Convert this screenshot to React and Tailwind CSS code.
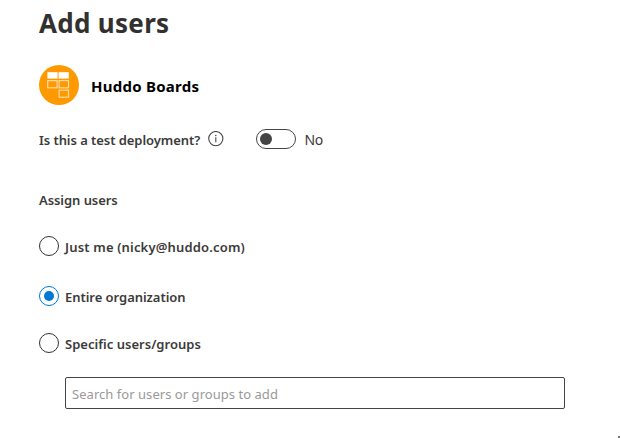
function BoardsLogo() {
  return (
    <svg className="size-10 shrink-0" viewBox="0 0 40 40">
      <circle cx="20" cy="20" r="20" fill="#ff9900" />
      <rect x="8.4" y="7.2" width="10.2" height="6.4" fill="#fff" />
      <rect x="19.6" y="7.2" width="10.2" height="6.4" fill="#fff" />
      <g fill="none" stroke="#ffd9a0" strokeWidth="1.2">
        <rect x="8.7" y="15.6" width="9.4" height="7.2" />
        <rect x="20.1" y="15.6" width="9.4" height="7.2" />
        <rect x="20.1" y="25.2" width="9.4" height="7" />
      </g>
    </svg>
  );
}

function InfoIcon() {
  return (
    <svg className="ml-2 size-4 shrink-0" viewBox="0 0 16 16">
      <circle cx="7.8" cy="7.6" r="7.1" fill="none" stroke="#444" strokeWidth="1.1" />
      <path d="M7.8 6.3v5" stroke="#444" strokeWidth="1.1" />
      <circle cx="7.8" cy="4.4" r=".75" fill="#444" />
    </svg>
  );
}

function Option({ label, checked, className, textClass }) {
  return (
    <label className={"flex h-5 items-center " + className}>
      <span
        className={
          "flex size-5 shrink-0 items-center justify-center rounded-full border " +
          (checked ? "border-[#0078d4]" : "border-[#323130]")
        }
      >
        {checked && <span className="size-2.5 rounded-full bg-[#0078d4]" />}
      </span>
      <span className={"ml-1.5 pt-0.5 leading-5 " + textClass}>{label}</span>
    </label>
  );
}

export default function App() {
  return (
    <main className="flex h-[438px] w-[621px] flex-col overflow-hidden bg-white pl-[39px] font-['Noto_Sans','Open_Sans',sans-serif] text-[13px] font-semibold whitespace-nowrap text-[#3b3a39]">
      <h1 className="mt-1 h-[61px] text-[26px] leading-[38px] font-bold tracking-[0.3px] text-[#323130]">Add users</h1>
      <div className="flex h-10 items-center">
        <BoardsLogo />
        <span className="ml-3 pt-0.5 text-[15px] leading-5 font-bold tracking-[0.25px] text-black">Huddo Boards</span>
      </div>
      <div className="mt-6 flex h-5 items-center">
        <span className="w-[161px] pt-0.5 leading-5 tracking-[-0.06px]">Is this a test deployment?</span>
        <InfoIcon />
        <span className="ml-8 flex h-5 w-10 items-center rounded-full border border-[#444] pl-[3px]">
          <span className="size-3 rounded-full bg-[#444]" />
        </span>
        <span className="ml-[8.5px] pt-0.5 text-sm leading-5 font-normal tracking-[-0.3px]">No</span>
      </div>
      <h2 className="mt-[41px] leading-5 tracking-[-0.06px]">Assign users</h2>
      <Option className="mt-[26px]" label="Just me (nicky@huddo.com)" textClass="tracking-[0.17px]" />
      <Option className="mt-[30px]" label="Entire organization" textClass="tracking-[-0.04px]" checked />
      <Option className="mt-[27px]" label="Specific users/groups" textClass="tracking-[0.02px]" />
      <input
        className="mt-6 ml-[26px] h-8 w-[500px] shrink-0 rounded-xs border border-[#444] px-1.5 pt-0.5 text-[13px] font-normal tracking-[0.04px] placeholder:text-[#999]"
        placeholder="Search for users or groups to add"
      />
      <span className="mt-auto mr-px size-0.5 self-end bg-[#777]" />
    </main>
  );
}
